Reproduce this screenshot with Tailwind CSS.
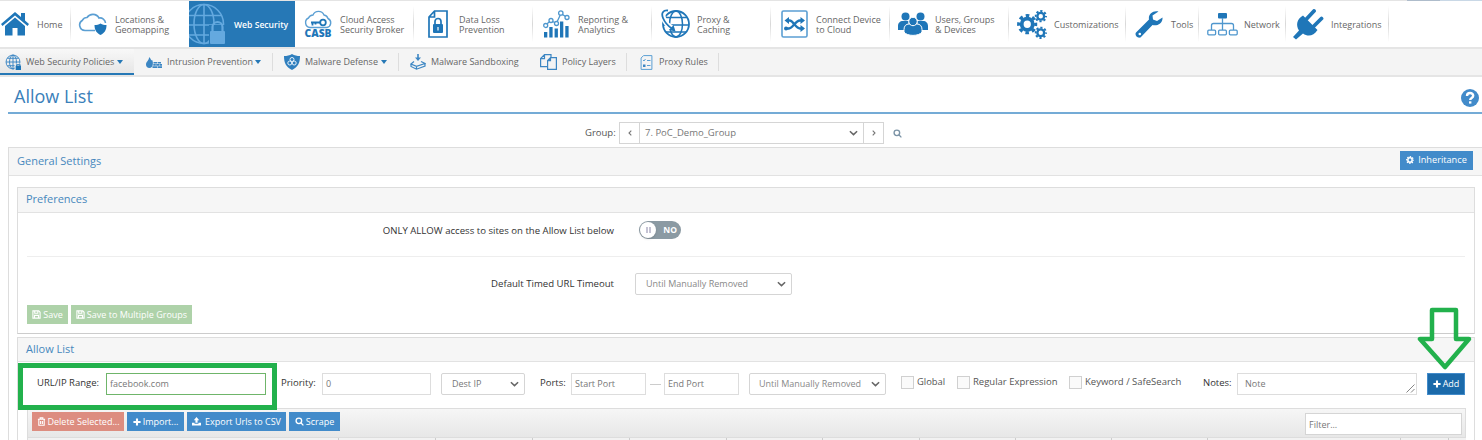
<!DOCTYPE html>
<html lang="en">
<head>
<meta charset="utf-8">
<title>Allow List</title>
<script src="https://cdn.jsdelivr.net/npm/@tailwindcss/browser@4"></script>
</head>
<body class="bg-white">
<svg class="hidden">
  <symbol id="globe" viewBox="0 0 30 30"><g fill="none" stroke="currentColor" stroke-width="1.8"><circle cx="15" cy="15" r="13"/><ellipse cx="15" cy="15" rx="6.5" ry="13"/><path d="M15 2v26M2 15h26M4.5 8h21M4.5 22h21"/></g></symbol>
  <symbol id="chev" viewBox="0 0 10 6"><path d="M1 1l4 3.8L9 1" fill="none" stroke="currentColor" stroke-width="1.7"/></symbol>
  <symbol id="disk" viewBox="0 0 10 10"><path fill="none" stroke="currentColor" stroke-width="1.2" d="M1 1h6.5L9 2.500V9H1zM3 1v2.600h3.500V1M2.800 9V6h4.400v3"/></symbol>
  <symbol id="plus" viewBox="0 0 10 10"><path d="M5 .5v9M.5 5h9" stroke="currentColor" stroke-width="2.6"/></symbol>
  <symbol id="mag" viewBox="0 0 10 10"><g fill="none" stroke="currentColor" stroke-width="1.5"><circle cx="4.300" cy="4.300" r="3.100"/><path d="M6.500 6.500L9.300 9.300"/></g></symbol>
  <symbol id="gear" viewBox="0 0 24 24"><g fill="none" stroke="currentColor"><circle cx="12" cy="12" r="6.500" stroke-width="4.500"/><circle cx="12" cy="12" r="10" stroke-width="3.800" stroke-dasharray="4.200 3.654" stroke-dashoffset="2.100"/></g></symbol>
</svg>

<div class="relative w-[1482px] h-[440px] overflow-hidden bg-white font-['Open_Sans',sans-serif] text-[9px] text-[#666]">

  <!-- Browser edge -->
  <div class="flex h-px bg-[#e4e4e4]"><i class="w-[1407px]"></i><i class="w-[33px] bg-[#aebccb]"></i><i class="flex-1 bg-[#c9d8e6]"></i></div>

  <!-- Main navigation -->
  <nav class="flex h-[46px] leading-[10px] text-[#1f76b8] [&_span]:text-[#666] [&>div]:flex [&>div]:items-center [&>div]:shrink-0 [&_svg]:shrink-0 [&_span]:whitespace-nowrap [&_span]:pt-[2px] [&>i]:w-px [&>i]:my-[5px] [&>i]:-ml-px [&>i]:bg-linear-to-b [&>i]:from-white [&>i]:via-[#d8d8d8] [&>i]:to-white">
    <div class="w-[71px] pl-[1px]">
      <svg class="w-[28px] h-[24px] mr-[8px]" viewBox="0 0 28 24"><path fill="currentColor" d="M14 0L0 12l1.500 2L14 3.500 26.500 14l1.500-2-4-3.500V1h-4v4zM14 5.500L4 14v9.500h7.500V16h5v7.500H24V14z"/></svg><span>Home</span>
    </div><i></i>
    <div class="w-[118px] pl-[7px]">
      <svg class="w-[29px] h-[24px] mr-[8px]" viewBox="0 0 29 24"><path fill="none" stroke="#5b9fd3" stroke-width="1.600" d="M17 18.500H7A5.500 5.500 0 0 1 4.500 8.200 5 5 0 0 1 9 5.500 7 7 0 0 1 21 6a5.500 5.500 0 0 1 6.500 5"/><path fill="currentColor" d="M22.500 11.500c2 1 3.500 1.500 6 1.500 0 5-2 8-6 10-4-2-6-5-6-10 2.500 0 4-.5 6-1.500z"/></svg><span>Locations &amp;<br>Geomapping</span>
    </div>
    <div class="w-[106px] bg-[#2678b6]">
      <svg class="w-[36px] h-[42px] mr-[9px]" viewBox="0 0 36 42"><g fill="none" stroke="#64a9df" stroke-width="1.600"><circle cx="15" cy="21" r="19.500"/><ellipse cx="15" cy="21" rx="10" ry="19.500"/><path d="M15 1.500v39M0 12.500h33M-4 22h38M0 32h33"/></g><rect x="20" y="22" width="16" height="20" fill="#2678b6"/><rect x="21" y="28" width="15" height="13" rx="1" fill="#64a9df"/><path d="M23.500 28v-4a5 5 0 0 1 10 0v4" fill="none" stroke="#64a9df" stroke-width="2.200"/></svg><b class="font-semibold text-[8.600px] text-white whitespace-nowrap pt-[2px]">Web Security</b>
    </div>
    <div class="w-[119px] pl-[8px]">
      <svg class="w-[30px] h-[28px] mr-[7px] overflow-visible" viewBox="0 0 30 28"><path fill="none" stroke="#5b9fd3" stroke-width="1.400" d="M7 17.500A5 5 0 0 1 5.500 8 5 5 0 0 1 10 5 6 6 0 0 1 21 5a5 5 0 0 1 4 3.500 4.800 4.800 0 0 1-1 9z"/><g fill="none" stroke="currentColor" stroke-width="1.800"><circle cx="20" cy="12.500" r="2.800"/><path d="M17 12.500H8M9.500 12.500v3M12.500 12.500v2"/></g><text x="1.500" y="27.300" textLength="27" lengthAdjust="spacingAndGlyphs" font-family="Open Sans" font-weight="800" font-size="10" fill="currentColor">CASB</text></svg><span>Cloud Access<br>Security Broker</span>
    </div><i></i>
    <div class="w-[119px] pl-[14px]">
      <svg class="w-[20px] h-[28px] mr-[11px]" viewBox="0 0 20 28"><path fill="none" stroke="currentColor" stroke-width="1.700" d="M6.500 1H19v26H1V7zM6.500 1v6H1"/><rect x="5" y="14" width="10" height="9" rx="1" fill="currentColor"/><path d="M7 14v-2.500a3 3 0 0 1 6 0V14" fill="none" stroke="currentColor" stroke-width="1.700"/><path d="M10 17v3.500" stroke="#fff" stroke-width="1.200"/></svg><span>Data Loss<br>Prevention</span>
    </div><i></i>
    <div class="w-[119px] pl-[10px]">
      <svg class="w-[27px] h-[28px] mr-[8px]" viewBox="0 0 27 28"><path fill="currentColor" d="M1 22h3.300v5.500H1zM6.300 17h3.300v10.500H6.300zM11.600 18.500h3.300v9h-3.300zM17 11.500h3.300v16H17zM22.300 16h3.300v11.500h-3.300z"/><g fill="#fff" stroke="#4f97ce" stroke-width="1.300"><path fill="none" d="M2.500 15l5-4 6 2 4.500-9.500 6 4"/><circle cx="2.700" cy="15.500" r="2"/><circle cx="8" cy="10.500" r="2"/><circle cx="13.500" cy="13.500" r="2"/><circle cx="17.800" cy="3" r="2.200"/><circle cx="24" cy="7.500" r="2"/></g></svg><span>Reporting &amp;<br>Analytics</span>
    </div><i></i>
    <div class="w-[119px] pl-[9px]">
      <svg class="w-[29px] h-[30px] mr-[7px]" viewBox="0 0 29 30"><g fill="none" stroke="currentColor" stroke-width="1.500"><circle cx="15" cy="15" r="13" stroke-width="1.800"/><ellipse cx="15" cy="15" rx="6.500" ry="13"/><path d="M4 8.500h22M2 16h26M5 23h20"/></g><path d="M2 3c-1 6 3 13 9 16" fill="none" stroke="#fff" stroke-width="5"/><path d="M7 1.500C2 1 0 4 2 9s5 8 9 10.500" fill="none" stroke="currentColor" stroke-width="1.800"/><path d="M14.500 22.500l-6.500-1.500 4.500-5z" fill="currentColor"/></svg><span>Proxy &amp;<br>Caching</span>
    </div><i></i>
    <div class="w-[119px] pl-[10px]">
      <svg class="w-[27px] h-[28px] mr-[8px]" viewBox="0 0 27 28"><rect x="1" y="1" width="25" height="26" rx="1.500" fill="none" stroke="#5b9fd3" stroke-width="1.600"/><g fill="none" stroke="currentColor" stroke-width="2.300"><path d="M4 18.500h4c4 0 6-8 11-8h1.500M6 10.500h2.500c4 0 6 8 10.500 8h1"/></g><g fill="currentColor"><path d="M19.500 7l4.500 3.500-4.500 3.500zM19.500 15l4.500 3.500-4.500 3.500zM8 7L3.500 10.500 8 14z"/><circle cx="5" cy="18.500" r="2"/></g></svg><span>Connect Device<br>to Cloud</span>
    </div><i></i>
    <div class="w-[119px] pl-[8px]">
      <svg class="w-[30px] h-[24px] mr-[7px]" viewBox="0 0 30 24"><g fill="currentColor"><circle cx="7.500" cy="4.500" r="4"/><circle cx="22.500" cy="4.500" r="4"/><path d="M0 18v-4c0-3 2-5 5-5h5.500v9zM30 18v-4c0-3-2-5-5-5h-5.500v9z"/></g><g fill="currentColor" stroke="#fff" stroke-width="1"><path d="M6 20v-2.500c0-3.500 2-5.500 5-5.500h8c3 0 5 2 5 5.500V20c-3 4.500-15 4.500-18 0z"/><circle cx="15" cy="9.500" r="4.200"/></g></svg><span>Users, Groups<br>&amp; Devices</span>
    </div><i></i>
    <div class="w-[117px] pl-[8px]">
      <svg class="w-[30px] h-[29px] mr-[7px]" viewBox="0 0 30 29"><use href="#gear" x="0" y="4" width="20.500" height="20.500"/><use href="#gear" x="17.500" y="0" width="12.500" height="12.500"/><use href="#gear" x="17.500" y="16.500" width="12.500" height="12.500"/></svg><span>Customizations</span>
    </div><i></i>
    <div class="w-[73px] pl-[9px]">
      <svg class="w-[28px] h-[29px] mr-[8px]" viewBox="0 0 28 29"><path fill="currentColor" d="M23.500 1.500C18 0 13 4 14 9.500L1 22.500c-1.500 2 .5 6 4.500 5L17.500 15C22 16.500 28 13 27.500 7.500L22 11l-4-1.500-.5-4z"/><circle cx="4.800" cy="24" r="1.300" fill="#fff"/></svg><span>Tools</span>
    </div><i></i>
    <div class="w-[87px] pl-[8px]">
      <svg class="w-[31px] h-[23px] mr-[6px]" viewBox="0 0 31 23"><rect x="11" y="0" width="9" height="5.500" rx="1" fill="currentColor"/><g fill="none" stroke="#4f97ce" stroke-width="1.300"><path d="M15.500 5v12M4.500 17v-4.500q0-2 2-2h18q2 0 2 2V17"/><rect x=".8" y="17.200" width="7.800" height="4.600" rx="1"/><rect x="11.600" y="17.200" width="7.800" height="4.600" rx="1"/><rect x="22.400" y="17.200" width="7.800" height="4.600" rx="1"/></g></svg><span>Network</span>
    </div><i></i>
    <div class="w-[103px] pl-[7px]">
      <svg class="w-[31px] h-[31px] mr-[7px]" viewBox="0 0 31 31"><path fill="currentColor" d="M10 6.500L24.500 21c-4 6-9.500 7-14.500 3.500L3 30.500 0 28l6-6.500C2.500 16 4 10 10 6.500z"/><path d="M13.500 10l7.500-8M20.500 17.500l8-8" stroke="currentColor" stroke-width="3.800" stroke-linecap="round"/></svg><span>Integrations</span>
    </div><i></i>
  </nav>

  <!-- Sub navigation -->
  <div class="flex h-[30px] bg-[#f4f4f4] border-y-2 border-[#e5e5e5] text-[#3c86c3] leading-[12px] [&_span]:text-[#666] [&_span]:whitespace-nowrap [&_svg]:shrink-0 [&>div]:flex [&>div]:items-center [&>div]:shrink-0 [&>i]:w-px [&>i]:-ml-px [&>i]:my-1 [&>i]:bg-[#ddd]">
    <div class="w-[134px] pl-[5px] pt-[2px] border-b-2 border-[#2678b6] bg-linear-to-b from-[#f8f8f8] to-[#e6e6e6]">
      <svg class="w-[16px] h-[16px] mr-[5px]" viewBox="0 0 30 30"><use href="#globe"/><rect x="18" y="18" width="12" height="12" fill="#eee"/><path fill="#1f76b8" d="M20 22h10v8H20z"/><path d="M22 23v-3h6v3" fill="none" stroke="#1f76b8" stroke-width="2"/></svg><span class="w-[91px]">Web Security Policies</span><svg class="w-[6px] h-[4px]" viewBox="0 0 6 4"><path d="M0 0h6L3 4z" fill="#2678b6"/></svg>
    </div>
    <div class="w-[139px] pl-[12px]">
      <svg class="w-[16px] h-[11px] mr-[5px]" viewBox="0 0 16 11"><path fill="currentColor" d="M3 0c1 1 2 2 2.200 3.500L6 2.800C7 4.500 7 6 6.800 7.500 6.500 9.500 5.500 11 3.400 11S0 9.500 0 7.500C0 4.500 3.300 3.500 3 0zM7.500 5H11v1.600H7.500zM11.600 5H15v1.600h-3.400zM7.300 7h2.500v1.700H7.300zM10.200 7h3.300v1.700h-3.300zM13.900 7H16v1.700h-2.100zM6.500 9.200H11V11H6.500zM11.500 9.200H16V11h-4.500z"/></svg><span class="w-[88px]">Intrusion Prevention</span><svg class="w-[6px] h-[4px]" viewBox="0 0 6 4"><path d="M0 0h6L3 4z" fill="#2678b6"/></svg>
    </div><i></i>
    <div class="w-[126px] pl-[11px]">
      <svg class="w-[16px] h-[16px] mr-[5px]" viewBox="0 0 16 16"><path fill="#2f7fbe" d="M8 0c2.500 1.500 5 2 8 2 0 7-2 11-8 14C2 13 0 9 0 2c3 0 5.500-.5 8-2z"/><g fill="none" stroke="#e6f1fa" stroke-width="1"><circle cx="8" cy="5.500" r="2"/><circle cx="5.800" cy="9" r="2"/><circle cx="10.200" cy="9" r="2"/></g></svg><span class="w-[76px]">Malware Defense</span><svg class="w-[6px] h-[4px]" viewBox="0 0 6 4"><path d="M0 0h6L3 4z" fill="#2678b6"/></svg>
    </div><i></i>
    <div class="w-[131px] pl-[11px]">
      <svg class="w-[16px] h-[16px] mr-[5px]" viewBox="0 0 16 16"><path d="M8 0v5" stroke="currentColor" stroke-width="1.600"/><path d="M5 3.500h6L8 7z" fill="currentColor"/><path d="M4 7.500L1 10l5.500 2.300L15 9.500 11 7.500M1 10v2.500l5.500 2.700L15 12V9.500M6.500 12.300v2.900" fill="none" stroke="currentColor" stroke-width="1.200"/></svg><span>Malware Sandboxing</span>
    </div>
    <div class="w-[97px] pl-[10px]">
      <svg class="w-[17px] h-[16px] mr-[5px]" viewBox="0 0 17 16"><g fill="#f4f4f4" stroke="currentColor" stroke-width="1.200"><path d="M4.500.6h6.500v12H.6V4.500zM4.500.6v4H.6"/><path d="M10.500 3.600h5.900v11.800H7.600V6.500zM10.500 3.600v3H7.600"/></g></svg><span>Policy Layers</span>
    </div><i></i>
    <div class="w-[92px] pl-[13px]">
      <svg class="w-[13px] h-[15px] mr-[6px]" viewBox="0 0 13 15"><path d="M3.500.6h8.400v13.800H1.100V3zM3 5l1 1 1.500-2M7 5.500h3.500M7 10.500h3.500" fill="none" stroke="#5b9fd3" stroke-width="1"/><path d="M3 9.500h2.500V12H3z" fill="currentColor"/></svg><span>Proxy Rules</span>
    </div><i></i>
  </div>

  <!-- Page title -->
  <header class="flex items-center justify-between h-[37px] ml-2 pl-[6px] pr-[3px] border-b-2 border-[#74abd6]">
    <h1 class="text-[18px] leading-[24px] text-[#3a80ba] mt-[3px]">Allow List</h1>
    <svg class="w-[18px] h-[18px] mt-[6px]" viewBox="0 0 18 18"><circle cx="9" cy="9" r="9" fill="#428bca"/><path d="M6 7c0-4 6.200-3.800 6.200-.3 0 2.300-3 2.200-3 4.300" fill="none" stroke="#fff" stroke-width="2.400"/><path d="M8 12.300h2.400v2.300H8z" fill="#fff"/></svg>
  </header>

  <!-- Group picker -->
  <div class="flex items-center h-[33px] pl-[585px] pt-[5px] pr-[580px] text-[9.500px]">
    <span class="w-[34px] whitespace-nowrap text-[#555]">Group:</span>
    <div class="flex items-center h-[22px] border border-[#d5d5d5] text-[#777] shrink-0">
      <div class="w-[19px] flex justify-center"><svg class="w-[4px] h-[6px]" viewBox="0 0 4 6"><path d="M3.300.6L1 3l2.300 2.400" fill="none" stroke="#777" stroke-width="1.100"/></svg></div>
      <div class="w-[225px] h-full border-x border-[#d5d5d5] flex items-center justify-between pl-[5px] pr-[5px]"><span>7. PoC_Demo_Group</span><svg class="w-[9px] h-[6px] text-[#666]"><use href="#chev"/></svg></div>
      <div class="w-[19px] flex justify-center"><svg class="w-[4px] h-[6px]" viewBox="0 0 4 6"><path d="M.7.600L3 3 .7 5.400" fill="none" stroke="#777" stroke-width="1.100"/></svg></div>
    </div>
    <svg class="w-[9px] h-[9px] ml-[9px] text-[#7b93a6] shrink-0"><use href="#mag"/></svg>
  </div>

  <!-- General settings -->
  <section class="ml-2 border-l border-t border-[#ddd] h-[300px]">
    <div class="flex items-center justify-between h-[28px] bg-[#f6f6f6] border-b border-[#e2e2e2] pl-[8px] pr-[9px]">
      <h2 class="text-[11px] text-[#4788bd]">General Settings</h2>
      <button class="flex items-center justify-center gap-[4px] w-[73px] h-[19px] -mt-[3px] bg-[#428bca] text-[9.200px] text-white"><svg class="w-[8px] h-[8px]"><use href="#gear"/></svg>Inheritance</button>
    </div>

    <div class="ml-[8px] mt-[11px] w-[1458px] h-[147px] border border-[#ddd] border-b-[#ccc]">
      <h3 class="h-[25px] leading-[22px] bg-[#f6f6f6] border-b border-[#e2e2e2] pl-[8px] text-[11px] text-[#4788bd]">Preferences</h3>
      <div class="mx-[9px] h-[44px] border-b border-[#eee] flex items-center pb-[9px]">
        <span class="w-[587px] text-right text-[9.600px] font-medium text-[#333] whitespace-nowrap pt-[2px]">ONLY ALLOW access to sites on the Allow List below</span>
        <div class="ml-[25px] w-[42px] h-[18px] rounded-full bg-[#8b9aa3] p-px flex items-center justify-between pr-[4px]">
          <div class="size-4 rounded-full bg-white shadow flex items-center justify-center gap-px"><i class="w-[2px] h-[6px] bg-[#c5c3d4]"></i><i class="w-[2px] h-[6px] bg-[#c5c3d4]"></i></div>
          <b class="text-white text-[8.500px]">NO</b>
        </div>
      </div>
      <div class="mx-[9px] h-[48px] flex items-center pt-[5px]">
        <span class="w-[587px] text-right text-[9.600px] font-medium text-[#333] whitespace-nowrap pt-[2px]">Default Timed URL Timeout</span>
        <div class="ml-[21px] w-[157px] h-[22px] border border-[#d5d5d5] rounded-[2px] flex items-center justify-between pl-[10px] pr-[5px] text-[#888]">Until Manually Removed<svg class="w-[9px] h-[6px] text-[#666]"><use href="#chev"/></svg></div>
      </div>
      <div class="flex gap-[3px] pl-[9px] text-white">
        <div class="w-[41px] h-[19px] bg-[#aed2a9] flex items-center justify-center gap-[2px]"><svg class="size-[9px]"><use href="#disk"/></svg>Save</div>
        <div class="w-[121px] h-[19px] bg-[#aed2a9] flex items-center justify-center gap-[2px] whitespace-nowrap"><svg class="size-[9px]"><use href="#disk"/></svg>Save to Multiple Groups</div>
      </div>
    </div>

    <div class="ml-[8px] mt-[3px] w-[1458px] h-[120px] border border-[#ddd]">
      <h3 class="h-[24px] leading-[21px] bg-[#f6f6f6] border-b border-[#e2e2e2] pl-[8px] text-[11px] text-[#4788bd]">Allow List</h3>
      <div class="flex h-[46px] pt-[11px] pl-[19px] leading-[20px] [&>*]:shrink-0 [&>*]:h-[22px] [&>*]:whitespace-nowrap text-[#777]">
        <label class="w-[69px] text-[9.500px] font-medium text-[#333]">URL/IP Range:</label>
        <div class="w-[160px] border border-[#6fb56a] pl-[3px]">facebook.com</div>
        <label class="ml-[15px] w-[41px] text-[9.500px] font-medium text-[#333]">Priority:</label>
        <div class="w-[109px] border border-[#ddd] pl-[3px]">0</div>
        <div class="ml-[10px] w-[84px] border border-[#d5d5d5] rounded-[2px] flex items-center justify-between pl-[10px] pr-[5px]">Dest IP<svg class="w-[9px] h-[6px] text-[#666]"><use href="#chev"/></svg></div>
        <label class="ml-[15px] w-[31px] text-[9.500px] font-medium text-[#333]">Ports:</label>
        <div class="w-[75px] border border-[#ddd] pl-[3px]">Start Port</div>
        <div class="w-[18px] flex items-center justify-center"><i class="w-[11px] h-px bg-[#ccc]"></i></div>
        <div class="w-[75px] border border-[#ddd] pl-[3px]">End Port</div>
        <div class="ml-[10px] w-[137px] border border-[#d5d5d5] rounded-[2px] flex items-center justify-between pl-[9px] pr-[5px] text-[#888]">Until Manually Removed<svg class="w-[9px] h-[6px] text-[#666]"><use href="#chev"/></svg></div>
        <div class="ml-[15px] flex items-center pb-[4px] text-[9.400px] text-[#555] w-[56px]"><i class="size-[13px] border border-[#d0d0d0] bg-[#fafafa] mr-[3px]"></i>Global</div>
        <div class="flex items-center pb-[4px] text-[9.500px] text-[#555] w-[112px]"><i class="size-[13px] border border-[#d0d0d0] bg-[#fafafa] mr-[3px]"></i>Regular Expression</div>
        <div class="flex items-center pb-[4px] text-[9.500px] text-[#555] w-[134px]"><i class="size-[13px] border border-[#d0d0d0] bg-[#fafafa] mr-[3px]"></i>Keyword / SafeSearch</div>
        <label class="w-[34px] text-[9.500px] font-medium text-[#333]">Notes:</label>
        <div class="w-[180px] border border-[#ddd] pl-[7px] flex justify-between items-end">Note<svg class="size-[9px] mr-px mb-px" viewBox="0 0 9 9"><path d="M.5 8.500l8-8M5 8.500L8.500 5" stroke="#777" stroke-width=".9"/></svg></div>
        <div class="ml-[10px] w-[38px] bg-[#1b6aaa] border border-[#428bca] text-white flex items-center justify-center gap-[2px]"><svg class="size-[8px]"><use href="#plus"/></svg>Add</div>
      </div>
      <div class="ml-[9px] w-[1439px] h-[30px] border border-[#ddd] bg-linear-to-b from-[#f6f6f6] to-[#e7e7e7] flex items-start pt-[3px] pl-[4px] pr-[3px] gap-[3px] text-white [&>div]:flex [&>div]:items-center [&>div]:whitespace-nowrap [&>div]:justify-center [&>div]:gap-[2px] [&>div]:h-[19px]">
        <div class="w-[92px] bg-[#dd8d80]"><svg class="size-[9px]" viewBox="0 0 10 10"><path d="M1 2.500h8M3.500 2.500V1h3v1.500M2 3v6.200h6V3M4 4.500v3.200M6 4.500v3.200" fill="none" stroke="currentColor" stroke-width="1.200"/></svg>Delete Selected...</div>
        <div class="w-[57px] bg-[#428bca]"><svg class="size-[8px]"><use href="#plus"/></svg>Import...</div>
        <div class="w-[99px] bg-[#428bca]"><svg class="size-[9px] mr-[2px]" viewBox="0 0 10 10"><path fill="currentColor" d="M5 0l3 3.500H6.200V6.500H3.800V3.500H2zM0 6.500h2.800v1h4.400v-1H10v3H0z"/></svg>Export Urls to CSV</div>
        <div class="w-[51px] bg-[#428bca]"><svg class="size-[9px]"><use href="#mag"/></svg>Scrape</div>
        <p class="ml-auto w-[157px] h-[22px] mt-px leading-[22px] bg-white border border-[#d5d5d5] pl-[3px] text-[#777]">Filter...</p>
      </div>
      <div class="ml-[9px] w-[1439px] h-[10px] bg-[#f2f2f2] border-l border-[#ddd] flex [&>i]:border-r [&>i]:border-[#ccc] [&>i]:shrink-0">
        <i class="w-[311px]"></i><i class="w-[97px]"></i><i class="w-[97px]"></i><i class="w-[97px]"></i><i class="w-[97px]"></i><i class="w-[96px]"></i><i class="w-[97px]"></i><i class="w-[96px]"></i><i class="w-[96px]"></i><i class="w-[96px]"></i><i class="w-[193px]"></i><i class="w-[48px]"></i>
      </div>
    </div>
  </section>

  <!-- Highlight annotations -->
  <div class="absolute left-[18px] top-[363px] w-[259px] h-[47px] border-[5px] border-[#22b14c]"></div>
  <svg class="absolute left-[1417px] top-[307px] w-[56px] h-[63px]" viewBox="0 0 56 63"><path d="M15 3h24v29h13L28 60 3 32h12z" fill="none" stroke="#22b14c" stroke-width="4.500" stroke-linejoin="round"/></svg>
</div>
</body>
</html>
